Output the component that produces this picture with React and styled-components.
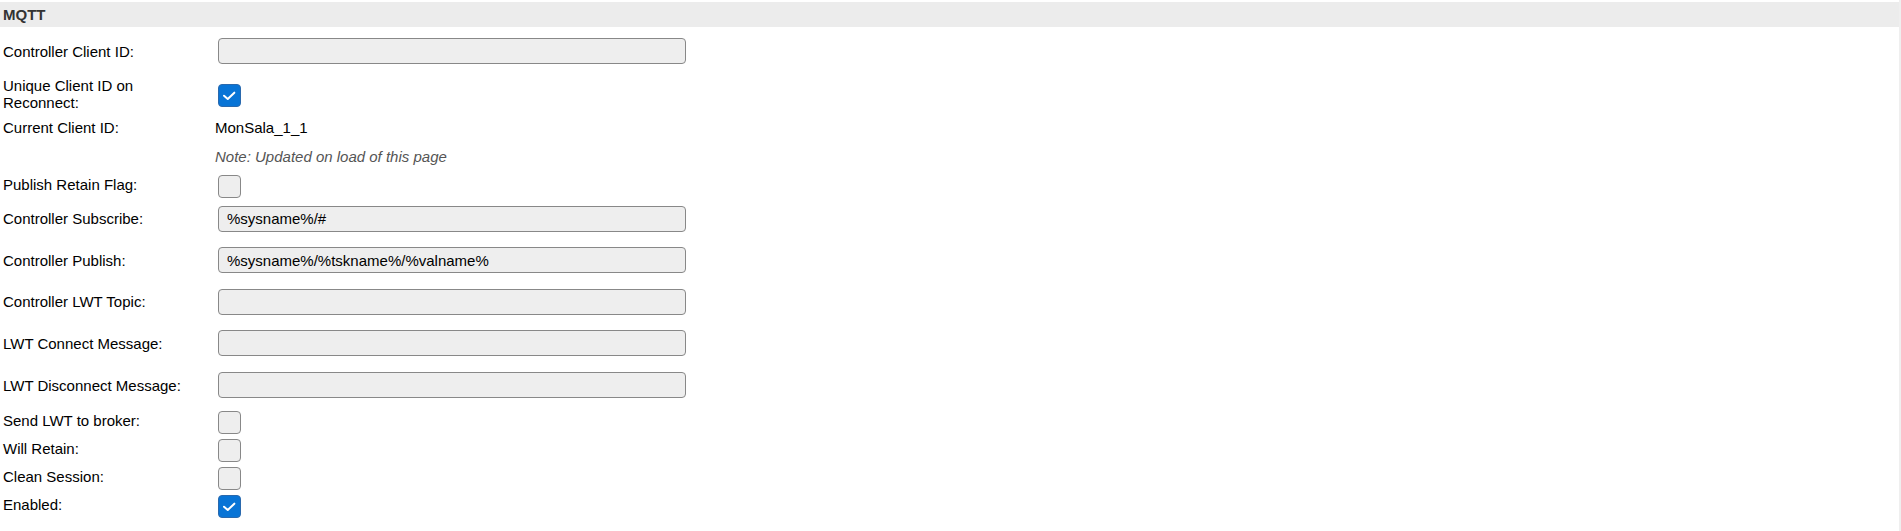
import React from "react";
import styled, { createGlobalStyle } from "styled-components";

const Global = createGlobalStyle`
  html, body { margin: 0; padding: 0; background: #fff; }
  body { font-family: "Liberation Sans", Arial, sans-serif; font-size: 15px; color: #000; }
`;

const Page = styled.div`
  width: 1899px;
  min-height: 531px;
  border-right: 2px solid #efefef;
  padding-top: 2px;
  box-sizing: content-box;
`;

const Header = styled.div`
  height: 25px;
  background: #ececec;
  display: flex;
  align-items: center;
  padding-left: 3px;
  font-weight: bold;
  color: #333;
  font-size: 15px;
`;

const Row = styled.div`
  display: grid;
  grid-template-columns: 215px 1fr;
  align-items: center;
  height: ${(p) => p.$h}px;
`;

const Label = styled.div`
  padding-left: 3px;
  line-height: 17px;
  width: 190px;
`;

const Value = styled.div`
  display: flex;
  align-items: center;
  line-height: 17px;
`;

const Note = styled.span`
  font-style: italic;
  color: #555;
`;

const TextInput = styled.input`
  margin: 0 0 0 3px;
  width: 468px;
  height: 26px;
  box-sizing: border-box;
  background: #eee;
  border: 1px solid #888;
  border-radius: 4px;
  padding: 0 8px;
  font-family: "Liberation Sans", Arial, sans-serif;
  font-size: 15px;
  color: #000;
  outline: none;
`;

const Box = styled.span`
  margin: 4px 0 0 3px;
  width: 23px;
  height: 23px;
  box-sizing: border-box;
  border-radius: 4px;
  display: flex;
  align-items: center;
  justify-content: center;
  background: ${(p) => (p.$checked ? "#0874d6" : "#eee")};
  border: 1px solid ${(p) => (p.$checked ? "#2a69ad" : "#888")};
`;

function Check({ checked }) {
  return (
    <Box $checked={checked}>
      {checked && (
        <svg width="23" height="23" viewBox="0 0 23 23">
          <path d="M5.5 11.8 L9.6 15.3 L16.8 8.4" fill="none" stroke="#fff" strokeWidth="2.2" strokeLinecap="round" strokeLinejoin="round" />
        </svg>
      )}
    </Box>
  );
}

export default function App() {
  return (
    <>
      <Global />
      <Page>
        <Header>MQTT</Header>
        <Row $h={48}>
          <Label>Controller Client ID:</Label>
          <Value><TextInput defaultValue="" /></Value>
        </Row>
        <Row $h={37}>
          <Label>Unique Client ID on Reconnect:</Label>
          <Value><Check checked /></Value>
        </Row>
        <Row $h={30}>
          <Label>Current Client ID:</Label>
          <Value>MonSala_1_1</Value>
        </Row>
        <Row $h={28}>
          <Label></Label>
          <Value><Note>Note: Updated on load of this page</Note></Value>
        </Row>
        <Row $h={28}>
          <Label>Publish Retain Flag:</Label>
          <Value><Check /></Value>
        </Row>
        <Row $h={41.5}>
          <Label>Controller Subscribe:</Label>
          <Value><TextInput defaultValue="%sysname%/#" /></Value>
        </Row>
        <Row $h={41.5}>
          <Label>Controller Publish:</Label>
          <Value><TextInput defaultValue="%sysname%/%tskname%/%valname%" /></Value>
        </Row>
        <Row $h={41.5}>
          <Label>Controller LWT Topic:</Label>
          <Value><TextInput defaultValue="" /></Value>
        </Row>
        <Row $h={41.5}>
          <Label>LWT Connect Message:</Label>
          <Value><TextInput defaultValue="" /></Value>
        </Row>
        <Row $h={42}>
          <Label>LWT Disconnect Message:</Label>
          <Value><TextInput defaultValue="" /></Value>
        </Row>
        <Row $h={28}>
          <Label>Send LWT to broker:</Label>
          <Value><Check /></Value>
        </Row>
        <Row $h={28}>
          <Label>Will Retain:</Label>
          <Value><Check /></Value>
        </Row>
        <Row $h={28}>
          <Label>Clean Session:</Label>
          <Value><Check /></Value>
        </Row>
        <Row $h={28}>
          <Label>Enabled:</Label>
          <Value><Check checked /></Value>
        </Row>
      </Page>
    </>
  );
}
